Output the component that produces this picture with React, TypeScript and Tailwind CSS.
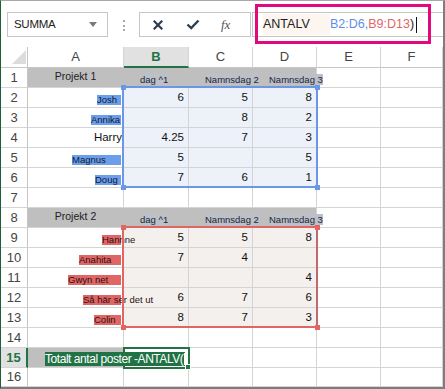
import React from 'react';

type CellSpec = {
  bg?: string;
  right?: string;
  content?: React.ReactNode;
};

const W = ['w-[96px]', 'w-[65px]', 'w-[64px]', 'w-[64px]', 'w-[64px]', 'flex-1'];

const GRAY = 'bg-[#bfbfbf]';
const BLUE = 'bg-[#edf1f9]';
const RED = 'bg-[#f4f0ed]';
const NOLINE = 'border-r-[#bfbfbf]';

function Num({ v }: { v: string }) {
  return (
    <div className="flex h-full items-center justify-end pr-[4px] text-[11.5px] leading-none text-[#111]">
      {v}
    </div>
  );
}

function Name({ text, w, red }: { text: string; w: string; red?: boolean }) {
  return (
    <div className="flex h-full items-end justify-end pb-[2px] pr-[2px]">
      <span
        className={`relative z-10 h-[10px] ${w} whitespace-nowrap text-[9.5px] leading-[10px] ${
          red ? 'bg-[#e06666] text-[#2b1111]' : 'bg-[#6d9eeb] text-[#0d1a33]'
        }`}
      >
        {text}
      </span>
    </div>
  );
}

function Label({ t }: { t: string }) {
  return (
    <div className="flex h-full items-end pb-[2px] pl-[16px]">
      <span className="relative z-10 whitespace-nowrap bg-[#bcc0c8] text-[9.5px] leading-[11px] text-[#1d2633]">
        {t}
      </span>
    </div>
  );
}

function Title({ t }: { t: string }) {
  return (
    <div className="flex h-full items-center justify-center pb-[1px] text-[10.5px] text-[#222]">{t}</div>
  );
}

const headRow = (title: string): CellSpec[] => [
  { bg: GRAY, right: NOLINE, content: <Title t={title} /> },
  { bg: GRAY, right: NOLINE, content: <Label t="dag ^1" /> },
  { bg: GRAY, right: NOLINE, content: <Label t="Namnsdag 2" /> },
  { bg: GRAY, content: <Label t="Namnsdag 3" /> },
  {},
  {},
];

const dataRow = (name: React.ReactNode, fill: string, b: string, c: string, d: string): CellSpec[] => [
  { content: name },
  { bg: fill, content: b ? <Num v={b} /> : null },
  { bg: fill, content: c ? <Num v={c} /> : null },
  { bg: fill, content: d ? <Num v={d} /> : null },
  {},
  {},
];

const empty: CellSpec[] = [{}, {}, {}, {}, {}, {}];

const rows: CellSpec[][] = [
  headRow('Projekt 1'),
  dataRow(<Name text="Josh" w="w-[24px]" />, BLUE, '6', '5', '8'),
  dataRow(<Name text="Annika" w="w-[30px]" />, BLUE, '', '8', '2'),
  dataRow(
    <div className="flex h-full items-center justify-end pr-[1px] pt-[1px] text-[11.5px] leading-none text-[#111]">
      Harry
    </div>,
    BLUE,
    '4.25',
    '7',
    '3'
  ),
  dataRow(<Name text="Magnus" w="w-[49px]" />, BLUE, '5', '', '5'),
  dataRow(<Name text="Doug" w="w-[26px]" />, BLUE, '7', '6', '1'),
  empty,
  headRow('Projekt 2'),
  dataRow(<Name text="Hannne" w="w-[19px]" red />, RED, '5', '5', '8'),
  dataRow(<Name text="Anahita" w="w-[42px]" red />, RED, '7', '4', ''),
  dataRow(<Name text="Gwyn net" w="w-[53px]" red />, RED, '', '', '4'),
  dataRow(<Name text="Så här ser det ut" w="w-[38px]" red />, RED, '6', '7', '6'),
  dataRow(<Name text="Colin" w="w-[27px]" red />, RED, '8', '7', '3'),
  empty,
  [
    {
      bg: GRAY,
      content: (
        <div className="flex h-full items-end pb-[1px] pl-[17px]">
          <span className="relative z-40 flex h-[14px] w-[140px] items-center whitespace-nowrap bg-[#217346] text-[12px] leading-none tracking-[-0.45px] text-white">
            Totalt antal poster -ANTALV(
            <span className="ml-[1px] inline-block h-[12px] w-[1px] bg-white" />
          </span>
        </div>
      ),
    },
    {},
    {},
    {},
    {},
    {},
  ],
  empty,
];

function XIcon() {
  return (
    <svg width="10" height="10" viewBox="0 0 10 10">
      <path d="M1.5 1.5 L8.5 8.5 M8.5 1.5 L1.5 8.5" stroke="#2e3d4f" strokeWidth="2.2" strokeLinecap="square" />
    </svg>
  );
}

function CheckIcon() {
  return (
    <svg width="14" height="11" viewBox="0 0 14 11">
      <path d="M1.5 5.5 L5.2 9 L12.5 1.5" stroke="#2e3d4f" strokeWidth="2.4" fill="none" />
    </svg>
  );
}

function Handle({ className }: { className: string }) {
  return <div className={`absolute z-30 h-[5px] w-[5px] ${className}`} />;
}

export default function App() {
  return (
    <div className="relative h-[389px] w-[445px] overflow-hidden border-b-2 border-l border-r-2 border-t border-b-[#7d7d7d] border-l-[#1e5e3a] border-r-[#7d7d7d] border-t-[#a9a9a9] bg-white font-['Liberation_Sans',Arial,sans-serif]">
      {/* Toolbar */}
      <div className="flex h-[46px] items-start">
        <div className="ml-[6px] mt-[11px] flex h-[25px] w-[101px] items-center justify-between border border-[#c6c6c6] pl-[6px] pr-[10px]">
          <span className="text-[11.5px] tracking-[-0.3px] text-[#222]">SUMMA</span>
          <svg width="8" height="5" viewBox="0 0 8 5">
            <path d="M0 0 L8 0 L4 5 Z" fill="#7a7a7a" />
          </svg>
        </div>
        <div className="ml-[15px] mt-[19px] flex w-[2px] flex-col gap-[2.5px]">
          <div className="h-[2px] w-[2px] bg-[#a8a8a8]" />
          <div className="h-[2px] w-[2px] bg-[#a8a8a8]" />
          <div className="h-[2px] w-[2px] bg-[#a8a8a8]" />
        </div>
        <div className="ml-[14px] mt-[11px] flex h-[25px] w-[112px] items-center border border-[#c6c6c6]">
          <div className="ml-[13px]">
            <XIcon />
          </div>
          <div className="ml-[23px]">
            <CheckIcon />
          </div>
          <span className="ml-[21px] font-['Liberation_Serif',serif] text-[13px] italic text-[#555]">fx</span>
        </div>
        <div className="ml-[1px] mt-[11px] flex h-[25px] flex-1 items-center border-y border-l border-[#c6c6c6] pl-[10px] text-[12.5px] leading-none">
          <span className="inline-block w-[67px] bg-[#fdf6f0] py-[4px] text-[#222]">ANTALV</span>
          <span className="text-[#5f8fe4]">B2:D6,</span>
          <span className="text-[#e26767]">B9:D13</span>
          <span className="text-[#222]">)</span>
          <span className="ml-[2px] inline-block h-[16px] w-[1px] bg-[#111]" />
        </div>
      </div>

      {/* Pink annotation */}
      <div className="absolute left-[254px] top-[3px] z-50 h-[40px] w-[176px] border-[3px] border-[#e4087e]" />

      {/* Column headers */}
      <div className="flex h-[21px]">
        <div className="flex w-[27px] shrink-0 items-end justify-end border-b border-r border-b-[#c6c6c6] border-r-[#c6c6c6] pb-[3px] pr-[1px]">
          <svg width="14" height="14" viewBox="0 0 14 14">
            <path d="M14 0 L14 14 L0 14 Z" fill="#dcdcdc" />
          </svg>
        </div>
        {['A', 'B', 'C', 'D', 'E', 'F'].map((l, i) =>
          l === 'B' ? (
            <div
              key={l}
              className={`${W[i]} flex shrink-0 items-center justify-center border-b-2 border-r border-b-[#217346] border-r-[#d4d4d4] bg-[#e1e1e1] text-[13px] font-bold text-[#217346]`}
            >
              {l}
            </div>
          ) : (
            <div
              key={l}
              className={`${W[i]} flex shrink-0 items-center justify-center border-b border-r border-b-[#c6c6c6] border-r-[#d4d4d4] text-[13px] text-[#444]`}
            >
              {l}
            </div>
          )
        )}
      </div>

      {/* Body */}
      <div className="relative">
        {rows.map((cells, r) => {
          const n = r + 1;
          const active = n === 15;
          return (
            <div key={n} className={`flex ${n === 16 ? 'h-[19px]' : 'h-[20px]'}`}>
              <div
                className={`flex w-[27px] shrink-0 items-center justify-center border-b border-b-[#d4d4d4] text-[13px] ${
                  active
                    ? 'border-r-2 border-r-[#217346] bg-[#e1e1e1] font-bold text-[#217346]'
                    : 'border-r border-r-[#c6c6c6] text-[#444]'
                }`}
              >
                {n}
              </div>
              {cells.map((c, i) => (
                <div
                  key={i}
                  className={`${W[i]} relative h-full shrink-0 border-b border-r border-b-[#d4d4d4] ${
                    c.right ?? 'border-r-[#d4d4d4]'
                  } ${c.bg ?? 'bg-white'}`}
                >
                  {c.content}
                </div>
              ))}
            </div>
          );
        })}

        {/* Blue range B2:D6 */}
        <div className="absolute left-[121px] top-[18px] z-20 h-[102px] w-[196px] border-2 border-[#6b97e6]" />
        <Handle className="left-[120px] top-[17px] bg-[#6b97e6]" />
        <Handle className="left-[314px] top-[17px] bg-[#6b97e6]" />
        <Handle className="left-[120px] top-[117px] bg-[#6b97e6]" />
        <Handle className="left-[314px] top-[117px] bg-[#6b97e6]" />

        {/* Red range B9:D13 */}
        <div className="absolute left-[121px] top-[158px] z-20 h-[102px] w-[196px] border-2 border-[#e06666] border-r-[#c06a6c]" />
        <Handle className="left-[120px] top-[157px] bg-[#e06666]" />
        <Handle className="left-[314px] top-[157px] bg-[#e06666]" />
        <Handle className="left-[120px] top-[257px] bg-[#e06666]" />
        <Handle className="left-[314px] top-[257px] bg-[#e06666]" />

        {/* Active cell B15 */}
        <div className="absolute left-[122px] top-[279px] z-30 h-[22px] w-[67px] border-2 border-[#217346]" />
        <div className="absolute left-[184px] top-[296px] z-50 h-[6px] w-[6px] border border-white bg-[#217346]" />
      </div>
    </div>
  );
}
